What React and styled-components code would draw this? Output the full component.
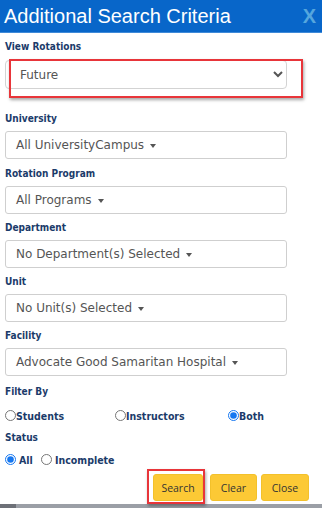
import React from "react";
import styled, { createGlobalStyle } from "styled-components";

const Global = createGlobalStyle`
  html, body {
    margin: 0;
    padding: 0;
    background: #fff;
  }
  body {
    font-family: "DejaVu Sans", Verdana, sans-serif;
  }
`;

/* modal shell */
const Modal = styled.div`
  width: 322px;
  height: 508px;
  display: flex;
  flex-direction: column;
  background: #fff;
  overflow: hidden;
`;

const Header = styled.header`
  height: 33px;
  flex: none;
  display: flex;
  align-items: center;
  justify-content: space-between;
  padding: 0 6px 0 4px;
  background: #0866c9;
  border-bottom: 1px solid #3f8ad8;
  box-sizing: border-box;
`;

const Title = styled.h1`
  margin: 0;
  font-family: "Liberation Sans", Arial, sans-serif;
  font-size: 20px;
  font-weight: 400;
  color: #fff;
  line-height: 1;
`;

const CloseX = styled.span`
  font-family: "Liberation Sans", Arial, sans-serif;
  font-size: 20px;
  font-weight: 700;
  color: #55a6de;
  line-height: 1;
`;

/* form body */
const Body = styled.div`
  flex: 1;
  display: flex;
  flex-direction: column;
  padding: 8px 5px 0 5px;
`;

const Field = styled.div`
  display: flex;
  flex-direction: column;
  margin-bottom: ${(p) => p.$mb || 8}px;
`;

const Label = styled.div`
  font-family: "DejaVu Sans Condensed", "DejaVu Sans", Verdana, sans-serif;
  font-size: 10px;
  font-weight: 700;
  line-height: 11px;
  color: #1b3b6a;
  margin-bottom: ${(p) => p.$mb || 7}px;
`;

/* annotation highlight */
const Highlight = styled.div`
  position: relative;
  width: fit-content;
  margin-right: ${(p) => p.$mr || 0}px;
  &::after {
    content: "";
    position: absolute;
    top: ${(p) => p.$t}px;
    left: ${(p) => p.$l}px;
    right: ${(p) => p.$r}px;
    bottom: ${(p) => p.$b}px;
    border: 2px solid #e8353a;
    box-shadow: 1px 2px 3px rgba(0, 0, 0, 0.35);
    pointer-events: none;
  }
`;

const NativeSelect = styled.select`
  display: block;
  width: 282px;
  height: 29px;
  box-sizing: border-box;
  border: 1px solid #d3d3d3;
  border-radius: 4px;
  background: #fff;
  padding: 0 4px 0 10px;
  font-family: "DejaVu Sans", Verdana, sans-serif;
  font-size: 12px;
  color: #555;
  outline: none;
`;

const Dropdown = styled.div`
  width: 282px;
  height: 28px;
  box-sizing: border-box;
  border: 1px solid #cfcfcf;
  border-radius: 3px;
  background: #fff;
  display: flex;
  align-items: center;
  padding-left: 10px;
  font-size: 12px;
  color: #555;
  white-space: nowrap;
`;

const Caret = styled.span`
  display: inline-block;
  margin-left: 6px;
  margin-top: 2px;
  width: 0;
  height: 0;
  border-left: 3.5px solid transparent;
  border-right: 3.5px solid transparent;
  border-top: 4px solid #555;
`;

/* radios */
const RadioRow = styled.div`
  display: grid;
  grid-template-columns: ${(p) => p.$cols || "110px 113px 1fr"};
  align-items: center;
  height: 13px;
  margin-bottom: ${(p) => p.$mb || 0}px;
`;

const RadioLabel = styled.label`
  display: flex;
  align-items: center;
  gap: ${(p) => p.$gap || 0}px;
  font-family: "DejaVu Sans Condensed", "DejaVu Sans", Verdana, sans-serif;
  font-size: 10.5px;
  font-weight: 700;
  color: #1b3b6a;

  input {
    width: 11px;
    height: 11px;
    margin: 0;
    accent-color: #1677f0;
  }
`;

/* actions */
const Actions = styled.div`
  display: flex;
  justify-content: flex-end;
  align-items: center;
  gap: 4px;
  padding-right: 8px;
  margin-top: 8px;
`;

const Btn = styled.button`
  display: block;
  height: 27px;
  width: ${(p) => p.$w}px;
  border: 1px solid #f3c12b;
  border-radius: 3px;
  background: #fcc935;
  color: #333;
  font-family: "Open Sans", "Liberation Sans", sans-serif;
  font-size: 10.5px;
  padding: 0;
  cursor: pointer;
`;

const Footer = styled.div`
  height: 4px;
  flex: none;
  margin-top: auto;
  background: linear-gradient(90deg, #6d7077 0, #6d7077 16px, #9b9fa6 16px);
`;

export default function App() {
  const [filter, setFilter] = React.useState("both");
  const [status, setStatus] = React.useState("all");

  return (
    <>
      <Global />
      <Modal>
        <Header>
          <Title>Additional Search Criteria</Title>
          <CloseX>X</CloseX>
        </Header>

        <Body>
          <Field $mb={24}>
            <Label $mb={8}>View Rotations</Label>
            <Highlight $t={-1} $l={4} $r={-16} $b={-9}>
              <NativeSelect defaultValue="future">
                <option value="future">Future</option>
                <option value="current">Current</option>
                <option value="past">Past</option>
              </NativeSelect>
            </Highlight>
          </Field>

          <Field $mb={9}>
            <Label>University</Label>
            <Dropdown>All UniversityCampus<Caret /></Dropdown>
          </Field>
          <Field>
            <Label>Rotation Program</Label>
            <Dropdown>All Programs<Caret /></Dropdown>
          </Field>
          <Field>
            <Label>Department</Label>
            <Dropdown>No Department(s) Selected<Caret /></Dropdown>
          </Field>
          <Field>
            <Label>Unit</Label>
            <Dropdown>No Unit(s) Selected<Caret /></Dropdown>
          </Field>
          <Field $mb={10}>
            <Label>Facility</Label>
            <Dropdown>Advocate Good Samaritan Hospital<Caret /></Dropdown>
          </Field>

          <Label $mb={12}>Filter By</Label>
          <RadioRow $mb={10}>
            {[
              ["students", "Students"],
              ["instructors", "Instructors"],
              ["both", "Both"],
            ].map(([v, t]) => (
              <RadioLabel key={v}>
                <input
                  type="radio"
                  name="filter"
                  checked={filter === v}
                  onChange={() => setFilter(v)}
                />
                {t}
              </RadioLabel>
            ))}
          </RadioRow>

          <Label $mb={10}>Status</Label>
          <RadioRow $cols="36px 1fr">
            <RadioLabel $gap={3}>
              <input
                type="radio"
                name="status"
                checked={status === "all"}
                onChange={() => setStatus("all")}
              />
              All
            </RadioLabel>
            <RadioLabel $gap={3}>
              <input
                type="radio"
                name="status"
                checked={status === "incomplete"}
                onChange={() => setStatus("incomplete")}
              />
              Incomplete
            </RadioLabel>
          </RadioRow>

          <Actions>
            <Highlight $t={-5} $l={-6} $r={-2} $b={-3} $mr={3}>
              <Btn $w={50}>Search</Btn>
            </Highlight>
            <Btn $w={47}>Clear</Btn>
            <Btn $w={48}>Close</Btn>
          </Actions>
        </Body>

        <Footer />
      </Modal>
    </>
  );
}
